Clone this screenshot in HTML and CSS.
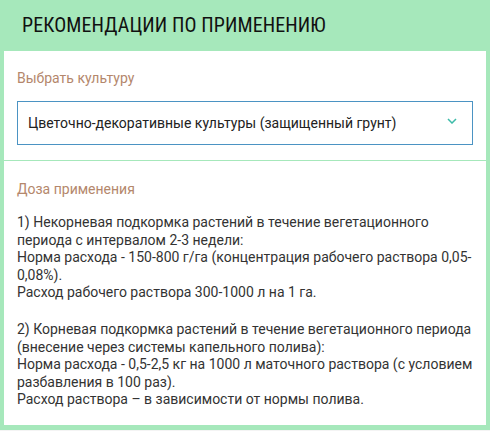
FILE: index.html
```html
<!DOCTYPE html>
<html lang="ru">
  <head>
    <meta charset="UTF-8" />
    <meta name="viewport" content="width=device-width, initial-scale=1.0" />
    <title>Рекомендации по применению</title>
    <link rel="stylesheet" href="styles.css">
  </head>
  <body>
    <div class="usage">
      <h2 class="usage-title">Рекомендации по применению</h2>

      <div class="usage-content">
        <div class="culture">
          <p class="label">Выбрать культуру</p>
          <div class="select">
            <span>Цветочно-декоративные культуры (защищенный грунт)</span>
            <svg class="chevron" width="10" height="6" viewBox="0 0 10 6">
              <path d="M1 1l4 4 4-4" fill="none" stroke="#3dbba9" stroke-width="1.5" />
            </svg>
          </div>
        </div>

        <div class="dose">
          <p class="label">Доза применения</p>
          <p class="dose-text">
            1) Некорневая подкормка растений в течение вегетационного периода с интервалом 2-3 недели:<br />
            Норма расхода - 150-800 г/га (концентрация рабочего раствора 0,05-0,08%).<br />
            Расход рабочего раствора 300-1000 л на 1 га.
          </p>
          <p class="dose-text">
            2) Корневая подкормка растений в течение вегетационного периода (внесение через системы капельного полива):<br />
            Норма расхода - 0,5-2,5 кг на 1000 л маточного раствора (с условием разбавления в 100 раз).<br />
            Расход раствора – в зависимости от нормы полива.
          </p>
        </div>
      </div>
    </div>
  </body>
</html>
```

FILE: styles.css
```css
:root {
  --green: #a6e8bb;
  --brown: #b4876c;
  --blue: #4b93c3;
  --text: #333333;
}
body {
  margin: 0;
  background: #f4f4f4;
  font-family: Roboto, "Noto Sans", sans-serif;
}
.usage {
  background-color: var(--green);
  padding: 0 4px 5px;
}
.usage-title {
  margin: 0;
  height: 50px;
  padding-bottom: 1px;
  display: flex;
  align-items: center;
  padding-left: 18px;
  font-size: 20px;
  font-weight: 400;
  font-stretch: 75%;
  letter-spacing: 0.1px;
  text-transform: uppercase;
  color: #111111;
}
.usage-content {
  background-color: #ffffff;
}
.culture {
  padding: 19px 13px 15px;
  border-bottom: 1px solid var(--green);
}
.label {
  margin: 0 0 15px;
  font-size: 14px;
  color: var(--brown);
}
.select {
  box-sizing: border-box;
  display: flex;
  justify-content: space-between;
  align-items: center;
  height: 44px;
  padding: 0 15px 0 10px;
  border: 1px solid var(--blue);
  font-size: 14px;
  color: #222222;
}
.chevron {
  margin-top: -4px;
}
.dose {
  padding: 20px 13px 16px;
}
.dose .label {
  margin-bottom: 17px;
}
.dose-text {
  margin: 0 0 19px;
  font-size: 14px;
  line-height: 17.6px;
  color: var(--text);
}
.dose-text:last-child {
  margin-bottom: 0;
}
```
